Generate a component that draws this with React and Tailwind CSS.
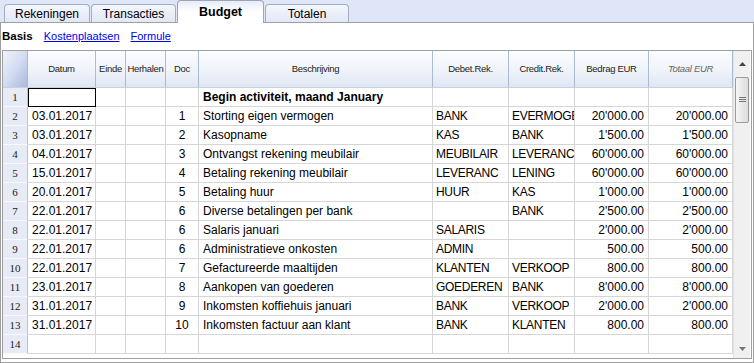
import React from 'react';

// column layout of the budget grid (widths include the 1px right border)
const cols = [
  { key: 'datum', label: 'Datum', w: 'w-[68px]', align: 'left' },
  { key: 'einde', label: 'Einde', w: 'w-[30px]', align: 'left' },
  { key: 'herhalen', label: 'Herhalen', w: 'w-[40px]', align: 'left' },
  { key: 'doc', label: 'Doc', w: 'w-[33px]', align: 'center' },
  { key: 'beschr', label: 'Beschrijving', w: 'w-[234px]', align: 'left' },
  { key: 'debet', label: 'Debet.Rek.', w: 'w-[76px]', align: 'left', narrow: true },
  { key: 'credit', label: 'Credit.Rek.', w: 'w-[66px]', align: 'left', narrow: true },
  { key: 'bedrag', label: 'Bedrag EUR', w: 'w-[74px]', align: 'right' },
  { key: 'totaal', label: 'Totaal EUR', w: 'w-[84px]', align: 'right' },
];

const rows = [
  { beschr: 'Begin activiteit, maand January', bold: true, selected: true },
  { datum: '03.01.2017', doc: '1', beschr: 'Storting eigen vermogen', debet: 'BANK', credit: 'EVERMOGE', bedrag: "20'000.00", totaal: "20'000.00" },
  { datum: '03.01.2017', doc: '2', beschr: 'Kasopname', debet: 'KAS', credit: 'BANK', bedrag: "1'500.00", totaal: "1'500.00" },
  { datum: '04.01.2017', doc: '3', beschr: 'Ontvangst rekening meubilair', debet: 'MEUBILAIR', credit: 'LEVERANC', bedrag: "60'000.00", totaal: "60'000.00" },
  { datum: '15.01.2017', doc: '4', beschr: 'Betaling rekening meubilair', debet: 'LEVERANC', credit: 'LENING', bedrag: "60'000.00", totaal: "60'000.00" },
  { datum: '20.01.2017', doc: '5', beschr: 'Betaling huur', debet: 'HUUR', credit: 'KAS', bedrag: "1'000.00", totaal: "1'000.00" },
  { datum: '22.01.2017', doc: '6', beschr: 'Diverse betalingen per bank', credit: 'BANK', bedrag: "2'500.00", totaal: "2'500.00" },
  { datum: '22.01.2017', doc: '6', beschr: 'Salaris januari', debet: 'SALARIS', bedrag: "2'000.00", totaal: "2'000.00" },
  { datum: '22.01.2017', doc: '6', beschr: 'Administratieve onkosten', debet: 'ADMIN', bedrag: '500.00', totaal: '500.00' },
  { datum: '22.01.2017', doc: '7', beschr: 'Gefactureerde maaltijden', debet: 'KLANTEN', credit: 'VERKOOP', bedrag: '800.00', totaal: '800.00' },
  { datum: '23.01.2017', doc: '8', beschr: 'Aankopen van goederen', debet: 'GOEDEREN', credit: 'BANK', bedrag: "8'000.00", totaal: "8'000.00" },
  { datum: '31.01.2017', doc: '9', beschr: 'Inkomsten koffiehuis januari', debet: 'BANK', credit: 'VERKOOP', bedrag: "2'000.00", totaal: "2'000.00" },
  { datum: '31.01.2017', doc: '10', beschr: 'Inkomsten factuur aan klant', debet: 'BANK', credit: 'KLANTEN', bedrag: '800.00', totaal: '800.00' },
  {},
];

const tabs = [
  { label: 'Rekeningen', w: 'w-[86px]' },
  { label: 'Transacties', w: 'w-[85px]' },
  { label: 'Budget', w: 'w-[87px]', active: true },
  { label: 'Totalen', w: 'w-[84px]' },
];

function Tab({ label, w, active }) {
  if (active) {
    return (
      <div className={`${w} h-[23px] -mb-px relative z-10 flex items-center justify-center rounded-t-[4px] border border-b-0 border-[#9ca6b8] bg-gradient-to-b from-[#e7ecf8] via-white to-white text-[12.5px] font-bold text-black`}>
        {label}
      </div>
    );
  }
  return (
    <div className={`${w} h-[18px] flex items-center justify-center rounded-t-[4px] border border-b-0 border-[#a4adbf] bg-gradient-to-b from-[#f4f6fc] to-[#e2e8f7] text-[12px] text-black pt-px`}>
      {label}
    </div>
  );
}

function Scrollbar() {
  return (
    <div className="w-[17px] shrink-0 flex flex-col bg-[#f0f0f0] border-l border-[#e2e2e2]">
      <div className="h-[26px] shrink-0 flex items-center justify-center">
        <svg width="7" height="4" viewBox="0 0 7 4"><path d="M0 4 L3.5 0 L7 4 Z" fill="#444" /></svg>
      </div>
      <div className="mx-[1px] h-[46px] shrink-0 rounded-[2px] border border-[#9a9a9a] bg-gradient-to-r from-[#f6f6f6] to-[#dcdcdc] flex items-center justify-center">
        <svg width="7" height="6" viewBox="0 0 7 6"><path d="M0 0.5H7M0 2.5H7M0 4.5H7" stroke="#777" strokeWidth="1" /></svg>
      </div>
      <div className="flex-1" />
      <div className="h-[18px] shrink-0 flex items-center justify-center">
        <svg width="7" height="4" viewBox="0 0 7 4"><path d="M0 0 L3.5 4 L7 0 Z" fill="#777" /></svg>
      </div>
    </div>
  );
}

export default function App() {
  return (
    <div className="w-[754px] h-[363px] bg-[#dfe6f8] font-['Liberation_Sans',Arial,sans-serif] overflow-hidden">
      {/* TAB STRIP */}
      <div className="h-[22px] flex items-end gap-[1px] pl-[4px]">
        {tabs.map((t) => <Tab key={t.label} {...t} />)}
      </div>

      {/* PANEL */}
      <div className="h-[341px] border border-[#9f9f9f] bg-white flex flex-col">
        <div className="h-[27px] shrink-0 flex items-center pl-[1px] text-[11px]">
          <span className="font-bold text-[11.5px] text-black">Basis</span>
          <span className="text-[#0000ee] underline ml-[11px]">Kostenplaatsen</span>
          <span className="text-[#0000ee] underline ml-[11px]">Formule</span>
        </div>

        {/* GRID */}
        <div className="mx-px h-[309px] shrink-0 border border-[#9f9f9f] flex overflow-hidden">
          <div className="w-[730px] shrink-0 flex flex-col">
            {/* header */}
            <div className="h-[37px] shrink-0 flex border-b border-[#c5d2e4] bg-gradient-to-b from-[#fbfcfe] via-[#f1f4fa] to-[#dfe7f3]">
              <div className="w-[25px] shrink-0 border-r border-[#a9bcd6] bg-gradient-to-br from-[#eef2fb] via-[#d3ddf1] to-[#a9b8dc]" />
              {cols.map((c) => (
                <div
                  key={c.key}
                  className={`${c.w} shrink-0 border-r border-[#a9bcd6] flex items-center justify-center text-[9.5px] tracking-[-0.3px] ${c.key === 'totaal' ? 'italic text-[#666]' : 'text-[#222]'}`}
                >
                  {c.label}
                </div>
              ))}
            </div>

            {/* rows */}
            {rows.map((r, i) => (
              <div key={i} className="h-[19px] shrink-0 flex text-[12px] text-black">
                <div className="w-[25px] shrink-0 border-r border-b border-r-[#b6c4dc] border-b-[#f6f8fc] bg-[#e6ebf5] flex items-center justify-center font-['Liberation_Serif',serif] text-[11px] text-[#222]">
                  {i + 1}
                </div>
                {cols.map((c) => {
                  const sel = r.selected && c.key === 'datum';
                  return (
                    <div
                      key={c.key}
                      className={`${c.w} shrink-0 border-r border-b border-[#d6d6d6] flex items-center overflow-hidden whitespace-nowrap ${c.narrow ? 'pl-[3px] pr-0 tracking-[-0.3px]' : 'px-[4px]'} ${c.align === 'right' ? 'justify-end' : c.align === 'center' ? 'justify-center' : 'justify-start'} ${sel ? 'outline outline-1 outline-black -outline-offset-1' : ''} ${r.bold && c.key === 'beschr' ? 'font-bold' : ''}`}
                    >
                      {r[c.key] || ''}
                    </div>
                  );
                })}
              </div>
            ))}
          </div>
          <Scrollbar />
        </div>
      </div>
    </div>
  );
}
